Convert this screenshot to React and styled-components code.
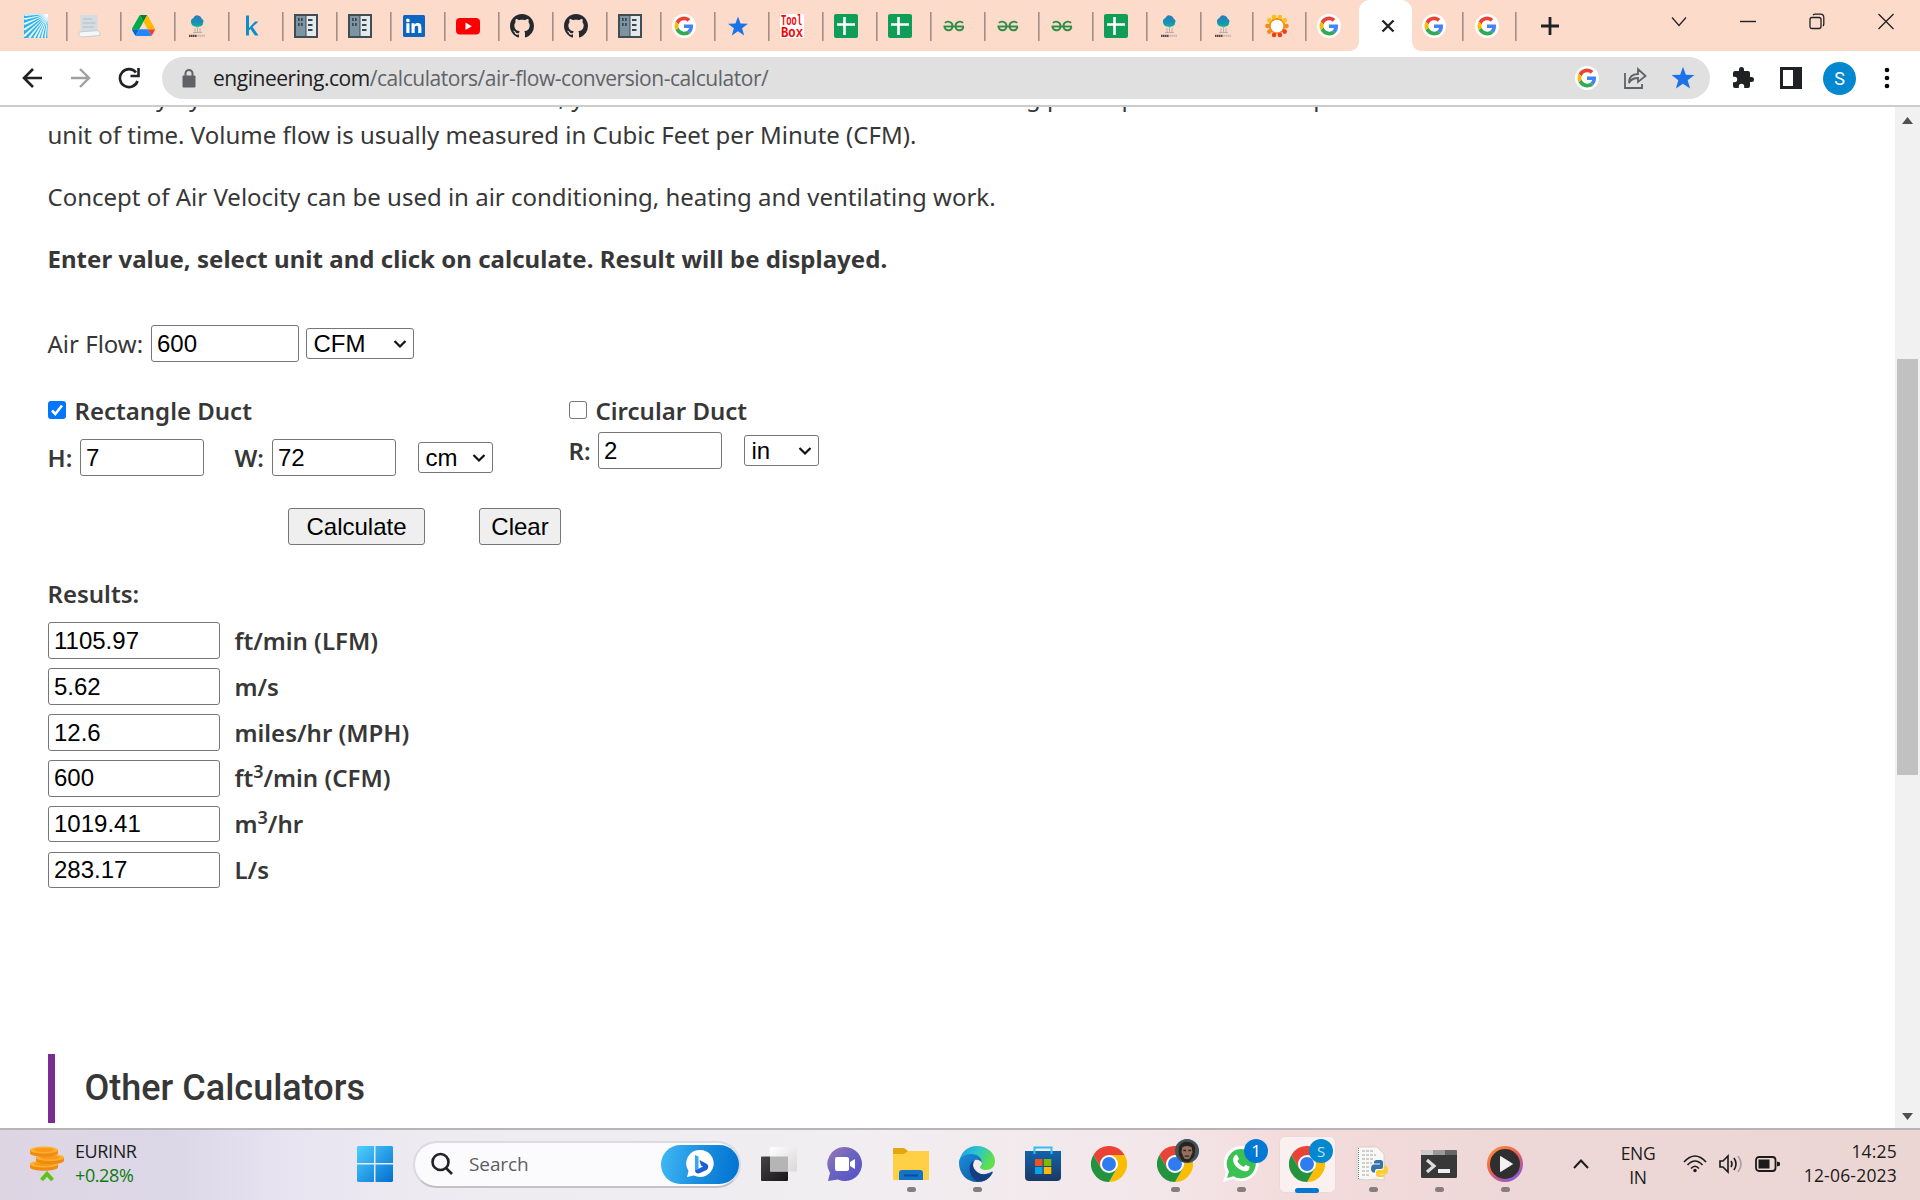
import React from 'react';
import styled, { createGlobalStyle } from 'styled-components';

const Global = createGlobalStyle`
  *{box-sizing:border-box}
  html,body{margin:0;padding:0;background:#fff}
  body{width:1920px;height:1200px;overflow:hidden;font-family:"Noto Sans",sans-serif}
  svg{display:block;flex:none}
`;
const ui = '"Open Sans","Noto Sans",sans-serif';

const Screen = styled.div`width:1920px;height:1200px;display:flex;flex-direction:column;overflow:hidden`;

const TabStrip = styled.div`height:51px;background:#fcdbca;display:flex;padding-left:13.5px;flex:none`;
const Tab = styled.div`
  width:${p => p.$w || 54}px;height:51px;flex:none;display:flex;align-items:center;padding:0 0 0 10.5px;
  background:linear-gradient(#a38e84,#a38e84) right 12px / ${p => (p.$bare ? 0 : 1.6)}px 29px no-repeat;
`;
const ActiveTab = styled.div`
  width:52.5px;height:51px;flex:none;background:#fff;border-radius:11px 11px 0 0;position:relative;
  display:flex;align-items:center;justify-content:center;padding-left:5px;
  &::before,&::after{content:"";position:absolute;bottom:0;width:9px;height:9px}
  &::before{left:-9px;background:radial-gradient(circle at 0 0,transparent 8.5px,#fff 9px)}
  &::after{right:-9px;background:radial-gradient(circle at 100% 0,transparent 8.5px,#fff 9px)}
`;
const NewTab = styled.div`width:66px;display:flex;align-items:center;justify-content:center`;
const WindowButtons = styled.div`margin-left:auto;display:flex;gap:53px;padding:13px 26px 0 0;height:30px`;

const Toolbar = styled.div`height:56px;flex:none;display:flex;align-items:center;border-bottom:2px solid #cbcccc;background:#fff;padding-left:21px`;
const NavButtons = styled.div`display:flex;gap:24px;width:141px`;
const AddressBar = styled.div`
  width:1548px;height:42px;border-radius:21px;background:#e0e0e0;display:flex;align-items:center;padding:0 15px 0 18px;
`;
const Url = styled.div`
  font:21px/42px ${ui};letter-spacing:-.46px;color:#5f6368;margin-left:15px;flex:1;white-space:nowrap;
  b{font-weight:400;color:#202124}
`;
const BarActions = styled.div`display:flex;gap:24px;align-items:center`;
const Extensions = styled.div`display:flex;align-items:center;margin-left:21px;gap:25px`;
const Avatar = styled.div`width:33px;height:33px;border-radius:50%;background:#0288d1;color:#fff;font:18px/33px Roboto,sans-serif;text-align:center;margin:0 3px 0 -4px`;

const Viewport = styled.div`height:1021px;flex:none;display:flex;overflow:hidden;background:#fff`;
const Page = styled.main`flex:1;min-width:0;padding-left:47.5px;color:#373737;font:24px/38.4px "Noto Sans",sans-serif;overflow:hidden`;
const Para = styled.p`margin:${p => p.$mt || 0}px 0 ${p => p.$mb || 24}px;white-space:nowrap;font-weight:${p => (p.$bold ? 700 : 400)};letter-spacing:${p => (p.$bold ? '.035px' : 0)}`;
const Row = styled.div`display:flex;align-items:center;margin-top:${p => p.$mt || 0}px;height:${p => p.$h || 37}px`;
const Text = styled.span`
  width:${p => (p.$w ? p.$w + 'px' : 'auto')};margin-left:${p => p.$ml || 0}px;
  font-weight:${p => (p.$plain ? 400 : 600)};white-space:nowrap;line-height:36px;flex:none;
`;
const Field = styled.input`
  width:${p => p.$w}px;height:${p => p.$h || 37}px;border:1.4px solid #767676;border-radius:3px;padding:0 5.5px;margin:0;
  font:24px "Liberation Sans",Arial,sans-serif;color:#000;background:#fff;flex:none;
`;
const SelectBox = styled.div`
  width:${p => p.$w}px;height:31px;border:1.4px solid #767676;border-radius:3px;display:flex;align-items:center;justify-content:space-between;
  padding:0 6px 0 7px;font:24px "Liberation Sans",Arial,sans-serif;color:#000;background:#fff;margin-left:${p => p.$ml}px;flex:none;
`;
const Ducts = styled.div`display:flex;margin-top:31px;height:96px`;
const Duct = styled.div`width:${p => p.$w}px;flex:none`;
const Check = styled.div`
  width:18px;height:18px;border-radius:3px;margin:0 9px 2px 0;flex:none;
  background:${p => (p.$on ? '#0075ff' : '#fff')};border:${p => (p.$on ? 0 : '1.5px solid #767676')};
`;
const Btn = styled.button`
  width:${p => p.$w}px;height:37px;border:1.4px solid #767676;border-radius:3px;background:#efefef;color:#000;
  font:24px "Liberation Sans",Arial,sans-serif;padding:1px 0 0 1px;margin:0;
`;
const Buttons = styled.div`display:flex;gap:54px;padding-left:240px;margin-top:19px`;
const Results = styled.div`display:flex;flex-direction:column;gap:9px;margin-top:10px`;
const ResultRow = styled.div`display:flex;height:37px;align-items:center;padding-bottom:${p => (p.$tight ? 1 : 0)}px`;
const Unit = styled.span`font-weight:600;line-height:36px;margin-left:15px;sup{font-size:18px;line-height:0;vertical-align:9px}`;
const Heading = styled.h2`
  margin:165px 0 0;height:69px;border-left:7px solid #7b2c91;padding-left:30px;font:500 36px/69px Roboto,sans-serif;color:#373737;
`;
const Scroll = styled.div`width:25px;background:#f1f1f1;display:flex;flex-direction:column;align-items:center;padding:10px 0 8px`;
const Thumb = styled.div`width:21px;height:416px;background:#c1c1c1;margin-top:235px;margin-bottom:auto`;

const Taskbar = styled.footer`
  height:72px;flex:none;border-top:2px solid #b9b3b8;display:flex;align-items:center;padding-bottom:2px;font-family:${ui};color:#1b1b1b;
  background:linear-gradient(90deg,#ded5e3 0,#dcd8e8 180px,#e8e3f1 285px,#edebf1 420px,#f1eef1 850px,#f3e7ea 1150px,#f4dbdb 1290px,#eed8d7 1500px,#ecd6d4 1920px);
`;
const Widget = styled.div`width:357px;padding-left:30px;display:flex;align-items:center;gap:9px;font-size:18px;line-height:24px;letter-spacing:-.4px;white-space:nowrap;
  em{font-style:normal;color:#0f7b0f;display:block}`;
const WidgetText = styled.div`padding-bottom:2px`;
const SearchBox = styled.div`
  width:328px;height:47px;margin:0 20px 0 20px;border-radius:24px;background:#fbfafc;border:2px solid #dcdae0;border-bottom-color:#c3c1c6;
  display:flex;align-items:center;padding:0 0 0 15px;color:#5d5d60;font-size:19px;letter-spacing:-.1px;
  span{margin-left:15px;flex:1}
`;
const BingPill = styled.div`width:78px;height:39px;border-radius:20px;background:linear-gradient(100deg,#40b9f5,#1b8fe0 50%,#0071d2);display:flex;align-items:center;justify-content:center`;
const Apps = styled.div`display:flex`;
const AppSlot = styled.div`
  width:${p => p.$w || 66}px;height:70px;display:flex;justify-content:center;align-items:center;position:relative;
  &::after{content:"";position:absolute;bottom:${p => (p.$active ? 6 : 7)}px;width:${p => (p.$active ? 24 : p.$dot ? 9 : 0)}px;height:5px;border-radius:3px;background:${p => (p.$active ? '#0078d4' : '#857d7f')}}
`;
const Tile = styled.div`width:57px;height:57px;flex:none;border-radius:6px;background:#faf0f0;border:1px solid #ead9da;display:flex;align-items:center;justify-content:center`;
const Badge = styled.div`
  position:absolute;left:${p => p.$x}px;top:10px;width:24px;height:24px;border-radius:50%;background:${p => p.$c || '#0078d4'};
  color:${p => p.$fg || '#fff'};font:${p => p.$fs || 17}px/24px ${ui};text-align:center;overflow:hidden;
`;
const Tray = styled.div`margin-left:auto;display:flex;align-items:center;font-size:17.5px;line-height:24px;letter-spacing:-.4px;padding-right:23px`;
const TrayIcons = styled.div`display:flex;align-items:center;gap:12px`;
const Lang = styled.div`text-align:center;width:60px;padding-top:1px;margin:0 15px 0 19px`;
const Clock = styled.div`text-align:right;width:117px;white-space:nowrap;display:flex;flex-direction:column;align-items:flex-end;letter-spacing:.2px;padding-bottom:2px`;

/* favicons */
const G = ({ s = 24 }) => (
  <svg width={s} height={s} viewBox="0 0 24 24"><circle cx="12" cy="12" r="12" fill="#fff" />
    <g transform="translate(2.6 2.6) scale(.392)">
      <path fill="#EA4335" d="M24 9.5c3.54 0 6.71 1.22 9.21 3.6l6.85-6.85C35.9 2.38 30.47 0 24 0 14.62 0 6.51 5.38 2.56 13.22l7.98 6.19C12.43 13.72 17.74 9.5 24 9.5z" />
      <path fill="#4285F4" d="M46.98 24.55c0-1.57-.15-3.09-.38-4.55H24v9.02h12.94c-.58 2.96-2.26 5.48-4.78 7.18l7.73 6c4.51-4.18 7.09-10.36 7.09-17.65z" />
      <path fill="#FBBC05" d="M10.53 28.59a14.5 14.5 0 0 1 0-9.18l-7.98-6.19a24 24 0 0 0 0 21.56l7.98-6.19z" />
      <path fill="#34A853" d="M24 48c6.48 0 11.93-2.13 15.89-5.81l-7.73-6c-2.15 1.45-4.92 2.3-8.16 2.3-6.26 0-11.57-4.22-13.47-9.91l-7.98 6.19C6.51 42.62 14.62 48 24 48z" />
    </g></svg>
);
const rayEnds = [[0, 1], [0, 5], [0, 10], [0, 15.5], [0, 22], [5, 24], [10, 24], [14, 24], [17.5, 24], [21, 24], [24, 24]];
const Rays = () => (
  <svg width="24" height="24" viewBox="0 0 24 24">
    <defs><radialGradient id="glow" cx="1" cy="0" r=".45"><stop offset=".2" stopColor="#fff" /><stop offset="1" stopColor="#fff" stopOpacity="0" /></radialGradient></defs>
    <rect width="24" height="24" fill="#2cb1ea" />
    {rayEnds.map(([x, y]) => <path key={x + '-' + y} d={`M24 0 ${x - 0.7} ${y - 0.7}L${x + 0.9} ${y + 0.9}z`} fill="#fff" opacity=".9" />)}
    <rect width="24" height="24" fill="url(#glow)" />
  </svg>
);
const Paper = () => (
  <svg width="24" height="24" viewBox="0 0 24 24"><path d="M2 1h17.500v17H3z" fill="#d3dce1" /><path d="M1 18 20 16.500q2.500 2 2 5L4 23q-4-1-3-5z" fill="#f4f7f8" stroke="#bcc5c9" strokeWidth=".8" /><path d="M5 5h9M4.500 9h13M4.500 13h11" stroke="#b3bec4" strokeWidth="1" /></svg>
);
const Drive = () => (
  <svg width="23" height="21" viewBox="0 0 87.3 78" preserveAspectRatio="none"><path d="m6.6 66.85 3.85 6.65c.8 1.4 1.95 2.5 3.3 3.3l13.75-23.8H0c0 1.55.4 3.1 1.2 4.5z" fill="#0066da" /><path d="M43.65 25 29.9 1.2c-1.35.8-2.5 1.9-3.3 3.3L1.2 48.5A9.06 9.06 0 0 0 0 53h27.5z" fill="#00ac47" /><path d="M73.55 76.8c1.35-.8 2.5-1.9 3.3-3.3l1.6-2.75 7.65-13.25c.8-1.4 1.2-2.95 1.2-4.5H59.8l5.85 11.5z" fill="#ea4335" /><path d="M43.65 25 57.4 1.2C56.05.4 54.5 0 52.9 0H34.4c-1.6 0-3.15.45-4.5 1.2z" fill="#00832d" /><path d="M59.8 53H27.5L13.75 76.8c1.35.8 2.9 1.2 4.5 1.2h50.8c1.6 0 3.15-.45 4.5-1.2z" fill="#2684fc" /><path d="m73.4 26.5-12.7-22c-.8-1.4-1.95-2.5-3.3-3.3L43.65 25 59.8 53h27.45c0-1.55-.4-3.1-1.2-4.5z" fill="#ffba00" /></svg>
);
const Tree = () => (
  <svg width="24" height="24" viewBox="0 0 24 24"><defs><linearGradient id="tree" x2="0" y2="1"><stop stopColor="#2d78c4" /><stop offset=".6" stopColor="#1595ae" /><stop offset="1" stopColor="#17b3a3" /></linearGradient></defs><path d="M5 8c-.5-2 1-3.500 2.500-4C8.500 2 10 1 11.500 1.500c2 0 4 1.500 4 3C17.500 5.500 18 7.500 17 9c0 2-1.500 3.500-3.500 3.500l-2 1-2-1C7 12.500 5 10.500 5 8z" fill="url(#tree)" /><path d="M11.500 12v7M9 14v5M14 14v5M7 18.500h9" stroke="#a5aaa8" strokeWidth=".8" /><path d="M3 21.800h8" stroke="#5e4646" strokeWidth="2.200" strokeDasharray="1.500 .4" /><path d="M11.500 21.800h8" stroke="#c9aea4" strokeWidth="2" strokeDasharray="1.400 .6" /></svg>
);
const Kaggle = () => <svg width="24" height="24" viewBox="0 0 24 24"><path d="M6 1.500h3v20H6zM8 15l7-7.500h3.500L12.600 13l6 8.500h-3.700l-4.500-6.600L8 17.300z" fill="#0c8fc7" /></svg>;
const Server = () => (
  <svg width="24" height="24" viewBox="0 0 24 24"><path d="M0 0h24v24H0z" fill="#414d54" /><path d="M2 2h9.500v20H2z" fill="#7d95a3" /><path d="M12.500 2H22v20h-9.500z" fill="#e3eaed" /><path d="M4 4h1.700v3H4zm3 0h1.700v3H7zM4 9h1.700v3H4zm3 0h1.700v3H7zM14 5h4.500v2H14zm0 5h4.500v2H14zm0 5h4.500v2H14z" fill="#3c474d" /></svg>
);
const LinkedIn = () => <svg width="24" height="24" viewBox="0 0 24 24"><rect x="1" y="1" width="22" height="22" rx="1.500" fill="#0a66c2" /><path fill="#fff" d="M4.300 9.300h3.200V19H4.300zM5.900 4.600a1.800 1.800 0 1 1 0 3.700 1.800 1.800 0 0 1 0-3.700zM9.500 9.300h3v1.300c.5-.9 1.500-1.600 3-1.600 3.200 0 3.900 2.100 3.900 4.700V19h-3.200v-4.700c0-1.200 0-2.600-1.600-2.600s-1.900 1.200-1.900 2.500V19H9.500z" /></svg>;
const YouTube = () => <svg width="24" height="24" viewBox="0 0 24 24"><rect y="4" width="24" height="16.500" rx="4" fill="#f00" /><path d="m9.500 8.500 6.300 3.700-6.300 3.700z" fill="#fff" /></svg>;
const GitHub = () => <svg width="24" height="24" viewBox="0 0 16 16"><path fill="#24292f" d="M8 0C3.580 0 0 3.580 0 8c0 3.540 2.290 6.530 5.470 7.590.4.070.55-.17.55-.38 0-.19-.01-.82-.01-1.490-2.010.37-2.530-.49-2.690-.94-.09-.23-.48-.94-.82-1.130-.28-.15-.68-.52-.01-.53.63-.01 1.080.58 1.230.82.72 1.210 1.870.87 2.330.66.070-.52.28-.87.51-1.070-1.780-.2-3.640-.89-3.640-3.950 0-.87.31-1.590.82-2.150-.08-.2-.36-1.020.08-2.120 0 0 .67-.21 2.200.82.64-.18 1.320-.27 2-.27s1.360.09 2 .27c1.530-1.040 2.200-.82 2.200-.82.44 1.100.16 1.920.08 2.120.51.56.82 1.270.82 2.150 0 3.070-1.870 3.750-3.650 3.950.29.25.54.73.54 1.480 0 1.070-.01 1.930-.01 2.200 0 .21.15.46.55.38A8.010 8.010 0 0 0 16 8c0-4.420-3.580-8-8-8z" /></svg>;
const Star = () => <svg width="24" height="24" viewBox="0 0 24 24"><path fill="#1a73e8" d="m12 2.500 2.500 6.900 7.500.3-5.900 4.600 2.100 7.200L12 17.300l-6.200 4.200 2.100-7.200L2 9.700l7.500-.3z" /></svg>;
const BigStar = () => <svg width="24" height="24" viewBox="1.500 2 21 20.500"><path fill="#1a73e8" d="m12 2.500 2.500 6.900 7.500.3-5.900 4.600 2.100 7.200L12 17.300l-6.200 4.200 2.100-7.200L2 9.700l7.500-.3z" /></svg>;
const Tool = () => (
  <svg width="24" height="24" viewBox="0 0 24 24"><rect width="24" height="24" fill="#fff" />
    <g fill="#f00" fontFamily="Liberation Mono, monospace" fontWeight="700" fontSize="10" transform="scale(1 1.550)">
      <text x="1" y="7.300" textLength="21" lengthAdjust="spacingAndGlyphs">Tool</text><text x="1" y="15" textLength="22" lengthAdjust="spacingAndGlyphs">Box</text>
    </g></svg>
);
const Sheets = () => <svg width="24" height="24" viewBox="0 0 24 24"><rect width="24" height="24" rx="2" fill="#0f9d58" /><path d="M3 10.500h18M10.500 3v18" stroke="#fff" strokeWidth="2.600" /></svg>;
const Geeks = () => (
  <svg width="24" height="24" viewBox="0 0 24 24" fill="none" stroke="#2f8d46" strokeWidth="1.900"><path d="M1.500 12.500h20.500" /><path d="M3 9C4.500 6.800 10.500 7 10.500 12S4 18 2.500 13M21 9C19.500 6.800 13.500 7 13.500 12s6.500 6 8 1" /></svg>
);
const Sun = () => (
  <svg width="24" height="24" viewBox="0 0 24 24"><circle cx="12" cy="12" r="7" fill="none" stroke="#f58a1c" strokeWidth="2.500" /><circle cx="12" cy="12" r="6.300" fill="#fff" />
    {Array.from({ length: 10 }, (_, i) => { const a = i * Math.PI / 5; return <circle key={i} cx={12 + 9.5 * Math.cos(a)} cy={12 + 9.5 * Math.sin(a)} r="2.300" fill={i < 4 && i > 0 ? '#ea3d22' : i > 5 ? '#fcc010' : '#f58a1c'} />; })}</svg>
);

const tabs = [Rays, Paper, Drive, Tree, Kaggle, Server, Server, LinkedIn, YouTube, GitHub, GitHub, Server, G, Star, Tool, Sheets, Sheets, Geeks, Geeks, Geeks, Sheets, Tree];

const Stroke = ({ w = 20, h = 20, d, c = '#202124', sw = 2.2 }) => <svg width={w} height={h} viewBox={`0 0 ${w} ${h}`} fill="none" stroke={c} strokeWidth={sw}><path d={d} /></svg>;
const Caret = () => <Stroke w={14} h={10} d="m1.500 2 5.500 5.500L12.500 2" c="#111" sw={2.2} />;

/* taskbar icons */
const Chrome = () => (
  <svg width="36" height="36" viewBox="0 0 48 48"><path d="M24 12h20.800A24 24 0 0 0 3.200 12L13.600 30z" fill="#ea4335" /><path d="M34.400 30 24 48A24 24 0 0 0 44.800 12H24z" fill="#fbbc04" /><path d="M13.600 30 3.200 12A24 24 0 0 0 24 48l10.400-18z" fill="#23933f" /><circle cx="24" cy="24" r="12" fill="#fff" /><circle cx="24" cy="24" r="9.300" fill="#2f7cf0" /></svg>
);
const Coins = () => (
  <svg width="36" height="36" viewBox="0 0 36 36">
    {[[14, 18], [20, 11.5], [14, 4]].map(([x, y]) => <g key={y}><path d={`M${x - 14} ${y}v3c0 5 28 5 28 0v-3z`} fill="#ef8b12" /><ellipse cx={x} cy={y} rx="14" ry="3.600" fill="#ffb02e" /><ellipse cx={x} cy={y} rx="10" ry="2" fill="#f79a1c" /></g>)}
    <path d="m11.500 34 5.500-6 5.500 6" fill="none" stroke="#5fc216" strokeWidth="4" /></svg>
);
const Windows = () => (
  <svg width="36" height="36" viewBox="0 0 36 36"><defs><linearGradient id="win" x2="1" y2="1"><stop stopColor="#4fd0ff" /><stop offset="1" stopColor="#006fd0" /></linearGradient></defs><path fill="url(#win)" d="M1 0h16v17H0V1zM18.500 0H35l1 1v16H18.500zM0 18.500h17V36H1l-1-1zM18.500 18.500H36V35l-1 1H18.500z" /></svg>
);
const Bing = () => (
  <svg width="28" height="28" viewBox="0 0 28 28"><path d="M14 0a13.500 13.500 0 1 1-6 25.500L1 27l1.500-6A13.500 13.500 0 0 1 14 0z" fill="#fff" /><path d="m9 5 3.500 1.500v12L9 21z" fill="#3aa5f5" /><path d="m13.500 10 7.500 4c2 2 1.500 4.500-.5 6L14 23c-2 1-5 0-5-2.500l8-4-2-1z" fill="#1b5fd6" /></svg>
);
const TaskView = () => (
  <svg width="36" height="36" viewBox="0 0 36 36"><defs><linearGradient id="tv" x2="1" y2="1"><stop stopColor="#444" /><stop offset="1" stopColor="#161616" /></linearGradient><linearGradient id="tw" x2="1" y2="1"><stop stopColor="#fff" /><stop offset="1" stopColor="#d9d7d8" /></linearGradient></defs><rect y="10.500" width="27" height="24.500" rx="1" fill="url(#tv)" /><rect x="9" y="1" width="27" height="24.500" rx="1" fill="url(#tw)" /><path d="M9 10.500h18v15H9z" fill="#b5b5b5" /></svg>
);
const Chat = () => (
  <svg width="36" height="36" viewBox="0 0 36 36"><defs><linearGradient id="ch" x2="1" y2="1"><stop stopColor="#a277b5" /><stop offset=".45" stopColor="#6a64c0" /><stop offset="1" stopColor="#554fc9" /></linearGradient></defs><path d="M18 1a17 17 0 1 1-7 32.500L1 35l2-8A17 17 0 0 1 18 1z" fill="url(#ch)" /><rect x="8" y="11" width="14" height="14" rx="2" fill="#fff" /><path d="m23 16 5-3v10l-5-3z" fill="#fff" /></svg>
);
const Folder = () => (
  <svg width="36" height="34" viewBox="0 0 36 34"><path d="M0 2q0-1 1-1h10l4 3h19q2 0 2 2v10H0z" fill="#e5a50d" /><path d="M0 7h11l4-3h21v28q0 1-1 1H1q-1 0-1-1z" fill="#ffcf45" /><path d="M6 33V26q0-3 3-3h18q3 0 3 3v7z" fill="#1273c9" /><path d="M11 28.500h14" stroke="#0a4d97" strokeWidth="2" /></svg>
);
const Edge = () => (
  <svg width="36" height="36" viewBox="0 0 36 36"><defs><linearGradient id="e1" x2="1" y2=".4"><stop stopColor="#1c9bdb" /><stop offset=".5" stopColor="#2bc3d2" /><stop offset="1" stopColor="#60e04a" /></linearGradient><linearGradient id="e2" x2="1" y2="1"><stop stopColor="#1a8fe0" /><stop offset="1" stopColor="#0f4a90" /></linearGradient></defs>
    <path d="M0 17C1 7 8 0 18 0s18 7 18 15c0 6-4 9-9 9-4 0-6-2-6-3s2-2 2-4c0-4-4-6-8-6C8 11 2 14 0 18z" fill="url(#e1)" /><path d="M0 17c0-6 6-9 12-9 7 0 11 4 11 9-1-2-4-4-7-3-5 2-4 12 5 14 5 1 9-1 12-2.500 1 0 1 1 .5 1.500A18 18 0 0 1 18 36C8 36 0 28 0 17z" fill="url(#e2)" /><path d="M16 14c-7 2-8 16 3 21.800C28 36 31 31 33.500 27 25 31 15 27 14 19q0-3 2-5z" fill="#123f80" /></svg>
);
const Store = () => (
  <svg width="36" height="36" viewBox="0 0 36 36"><defs><linearGradient id="st" x2="0" y2="1"><stop stopColor="#1164ad" /><stop offset="1" stopColor="#1c3864" /></linearGradient></defs><path d="M0 5h36v26q0 4-4 4H4q-4 0-4-4z" fill="url(#st)" /><path d="M9.500 8V1.500h17V8" fill="none" stroke="#35bdf2" strokeWidth="2" /><path d="M10 13h7.500v7H10z" fill="#f25022" /><path d="M18.800 13h7.500v7h-7.500z" fill="#7fba00" /><path d="M10 21h7.500v7H10z" fill="#00a4ef" /><path d="M18.800 21h7.500v7h-7.500z" fill="#ffb900" /></svg>
);
const WhatsApp = () => (
  <svg width="36" height="36" viewBox="0 0 36 36"><path d="M18 0a17.500 17.500 0 1 1-8 33L0 36l3-10A17.500 17.500 0 0 1 18 0z" fill="#fff" /><path d="M18 3a14.700 14.700 0 1 1-7.500 27.300L4 32l2-6.500A14.700 14.700 0 0 1 18 3z" fill="#3bc253" /><path d="M12 9.500c1-1 2-.8 2.600.4l1.200 2.700c.3.900-1.300 2-1.300 2.600 1 2.500 3.500 4.600 6 5.500.7 0 1.700-2 2.500-1.800l3.300 1.700c.8.600 0 3-1.200 3.900-2 1.300-4.500 1-8-1-4-2.300-7-6-7-9.500 0-2 .8-3.500 1.900-4.500z" fill="#fff" /></svg>
);
const Python = () => (
  <svg width="36" height="36" viewBox="0 0 36 36"><path d="M2 1h20l7 7v26l-9-1-8 1-10-1z" fill="#f7f7f5" stroke="#cfcbc8" strokeWidth=".8" /><path d="M7 5h12M7 9h14M7 13h11M7 17h10M7 21h8M7 25h8M7 29h8" stroke="#a5a5a5" strokeWidth="1" strokeDasharray="3 1" /><path d="M3.500 2v31" stroke="#777" strokeWidth="1" strokeDasharray="1 1" />
    <path d="M21.500 14h4q2.500 0 2.500 2.500v4.500q0 2-2 2h-4q-2 0-2 2v1.500h-1.500q-2.500-.5-2.500-4t2.500-4H25v-1h-6v-1q0-2.500 2.500-2.500z" fill="#3572a5" /><path d="M27.500 31h-4q-2.500 0-2.500-2.500V26q0-2 2-2h4q2 0 2-2v-2.500h1.500q2.500.5 2.500 4.500t-2.500 4.300H25v.7h5q0 2-2.500 2z" fill="#ffcc33" /></svg>
);
const Terminal = () => (
  <svg width="36" height="28" viewBox="0 0 36 28"><rect width="36" height="28" rx="1.500" fill="#383838" /><path d="M1 0h11v5H0V1z" fill="#ccc" /><path d="M12 0h12v5H12z" fill="#9a9a9a" /><path d="M24 0h11l1 1v4H24z" fill="#666" /><path d="m6 10 7 6-7 6" fill="none" stroke="#ddd" strokeWidth="3.200" /><path d="M17 19h12v4H17z" fill="#eee" /></svg>
);
const Media = () => (
  <svg width="36" height="36" viewBox="0 0 36 36"><defs><linearGradient id="md" x2=".7" y2="1"><stop stopColor="#fb9a30" /><stop offset=".5" stopColor="#f0604f" /><stop offset="1" stopColor="#8958d8" /></linearGradient></defs><circle cx="18" cy="18" r="18" fill="url(#md)" /><circle cx="18" cy="18" r="15" fill="#2f2f2f" /><path d="m13.500 10.500 12 7.500-12 7.500z" fill="#f2f2f2" stroke="#f2f2f2" strokeLinejoin="round" /></svg>
);
const Face = () => (
  <svg width="24" height="24" viewBox="0 0 26 26"><circle cx="13" cy="13" r="13" fill="#4a5250" /><path d="M4 9q3-7 10-6t8 7l-1 9-6 6-7-1-4-7z" fill="#262321" /><path d="M8 9q5-3 10 0l1 5-3 7-3 1-3-1-3-7z" fill="#94705e" /><path d="M9 12.500h3M14.500 12.500h3M10.500 18.500h5" stroke="#33261f" strokeWidth="1.500" /></svg>
);

const results = [
  ['1105.97', 'ft/min (LFM)'], ['5.62', 'm/s'], ['12.6', 'miles/hr (MPH)'],
  ['600', <>ft<sup>3</sup>/min (CFM)</>], ['1019.41', <>m<sup>3</sup>/hr</>], ['283.17', 'L/s'],
];

export default function App() {
  return (
    <Screen>
      <Global />
      <TabStrip>
        {tabs.map((I, i) => <Tab key={i}><I /></Tab>)}
        <Tab $w={52.5}><Tree /></Tab>
        <Tab $w={52.5}><Sun /></Tab>
        <Tab $w={52.5} $bare><G /></Tab>
        <ActiveTab><Stroke w={14} h={14} d="m1.500 1.500 11 11M12.500 1.500l-11 11" sw={2.3} /></ActiveTab>
        <Tab $w={52.5}><G /></Tab>
        <Tab $w={52.5}><G /></Tab>
        <NewTab><Stroke w={18} h={18} d="M9 0v18M0 9h18" sw={2.8} /></NewTab>
        <WindowButtons>
          <Stroke w={16} h={17} d="m1 4.500 7 8 7-8" sw={1.2} />
          <Stroke w={16} h={17} d="M0 8.500h16" sw={1.4} />
          <Stroke w={16} h={17} d="M1 6.500q0-2 2-2h7q2 0 2 2v7q0 2-2 2H3q-2 0-2-2zM4 2q1-.8 2-.8h5.500q3.300 0 3.300 3.300V11q0 1-.8 2" sw={1.3} />
          <Stroke w={16} h={17} d="m.5 1 15 15M15.500 1l-15 15" sw={1.3} />
        </WindowButtons>
      </TabStrip>
      <Toolbar>
        <NavButtons>
          <Stroke w={24} h={22} d="M21 11H3M12 2l-9 9 9 9" sw={2.6} />
          <Stroke w={24} h={22} d="M2 11h18M11 2l9 9-9 9" c="#a0a0a0" sw={2.4} />
          <Stroke w={24} h={22} d="M19 5.500A9 9 0 1 0 20.500 14M21.500 1v8h-8" sw={2.6} />
        </NavButtons>
        <AddressBar>
          <svg width="18" height="20" viewBox="0 0 18 20"><path d="M3 8h12v11H3z" fill="#5f6368" stroke="#5f6368" strokeLinejoin="round" /><path d="M5.500 9V5.500a3.500 3.500 0 0 1 7 0V9" fill="none" stroke="#5f6368" strokeWidth="2" /></svg>
          <Url><b>engineering.com</b>/calculators/air-flow-conversion-calculator/</Url>
          <BarActions>
            <G />
            <Stroke w={24} h={24} d="M2 7v15h17v-4M6 17C6 11 9 8 15 8V3l7.500 7L15 16v-4c-4 0-7 1-9 5z" c="#5f6368" sw={1.8} />
            <BigStar />
          </BarActions>
        </AddressBar>
        <Extensions>
          <svg width="24" height="24" viewBox="0 0 24 24"><path fill="#202124" d="M20.500 11H19V7a2 2 0 0 0-2-2h-4V3.500a2.500 2.500 0 0 0-5 0V5H4a2 2 0 0 0-2 2v3.800h1.500a2.700 2.700 0 0 1 0 5.400H2V20a2 2 0 0 0 2 2h3.800v-1.500a2.700 2.700 0 0 1 5.400 0V22H17a2 2 0 0 0 2-2v-4h1.500a2.500 2.500 0 0 0 0-5z" /></svg>
          <svg width="22" height="22" viewBox="0 0 22 22"><path fill="#202124" fillRule="evenodd" d="M0 0h22v22H0zM3 3v16h10V3z" /></svg>
          <Avatar>S</Avatar>
          <svg width="6" height="22" viewBox="0 0 6 22"><circle cx="3" cy="3" r="2.300" /><circle cx="3" cy="11" r="2.300" /><circle cx="3" cy="19" r="2.300" /></svg>
        </Extensions>
      </Toolbar>
      <Viewport>
        <Page>
          <Para $mt={-29.5} $mb={23.6}>air velocity by the cross-section area of a duct, you can determine the air volume flowing past a point in the duct per<br />unit of time. Volume flow is usually measured in Cubic Feet per Minute (CFM).</Para>
          <Para>Concept of Air Velocity can be used in air conditioning, heating and ventilating work.</Para>
          <Para $bold>Enter value, select unit and click on calculate. Result will be displayed.</Para>
          <Row $mt={46.5}>
            <Text $plain $w={103}>Air Flow:</Text><Field $w={148} defaultValue="600" /><SelectBox $w={108} $ml={7}>CFM<Caret /></SelectBox>
          </Row>
          <Ducts>
            <Duct $w={521}>
              <Row $h={36}><Check $on><Stroke w={18} h={18} d="m4 9.500 3.300 3.500L14 4.500" c="#fff" sw={2.6} /></Check><Text>Rectangle Duct</Text></Row>
              <Row $mt={10}><Text $w={32}>H:</Text><Field $w={124} defaultValue="7" /><Text $w={37} $ml={31}>W:</Text><Field $w={124} defaultValue="72" /><SelectBox $w={75} $ml={22}>cm<Caret /></SelectBox></Row>
            </Duct>
            <Duct $w={400}>
              <Row $h={36}><Check /><Text>Circular Duct</Text></Row>
              <Row $mt={3}><Text $w={29}>R:</Text><Field $w={124} defaultValue="2" /><SelectBox $w={75} $ml={22}>in<Caret /></SelectBox></Row>
            </Duct>
          </Ducts>
          <Buttons><Btn $w={137}>Calculate</Btn><Btn $w={82}>Clear</Btn></Buttons>
          <Row $mt={31} $h={36}><Text>Results:</Text></Row>
          <Results>{results.map(([v, u], i) => <ResultRow key={v} $tight={i > 2}><Field $w={172} $h={i > 3 ? 36 : 37} defaultValue={v} /><Unit>{u}</Unit></ResultRow>)}</Results>
          <Heading>Other Calculators</Heading>
        </Page>
        <Scroll>
          <svg width="11" height="7" viewBox="0 0 11 7"><path d="M0 7 5.500 0 11 7z" fill="#505050" /></svg>
          <Thumb />
          <svg width="11" height="7" viewBox="0 0 11 7"><path d="m0 0 5.500 7L11 0z" fill="#505050" /></svg>
        </Scroll>
      </Viewport>
      <Taskbar>
        <Widget><Coins /><WidgetText>EURINR<em>+0.28%</em></WidgetText></Widget>
        <Windows />
        <SearchBox><Stroke w={24} h={24} d="M10.500 2a8 8 0 1 0 0 16 8 8 0 0 0 0-16zM16 16l6 6" sw={2.6} /><span>Search</span><BingPill><Bing /></BingPill></SearchBox>
        <Apps>
          <AppSlot $w={36}><TaskView /></AppSlot>
          <AppSlot $w={96}><Chat /></AppSlot>
          <AppSlot $w={36} $dot><Folder /></AppSlot>
          <AppSlot $w={96} $dot><Edge /></AppSlot>
          <AppSlot $w={36}><Store /></AppSlot>
          <AppSlot $w={96}><Chrome /></AppSlot>
          <AppSlot $w={36} $dot><Chrome /><Badge $x={18}><Face /></Badge></AppSlot>
          <AppSlot $w={96} $dot><WhatsApp /><Badge $x={51}>1</Badge></AppSlot>
          <AppSlot $w={36} $active><Tile><Chrome /></Tile><Badge $x={20} $c="#0288d1" $fg="#bfe4f7" $fs={15}>S</Badge></AppSlot>
          <AppSlot $w={96} $dot><Python /></AppSlot>
          <AppSlot $w={36} $dot><Terminal /></AppSlot>
          <AppSlot $w={96} $dot><Media /></AppSlot>
        </Apps>
        <Tray>
          <Stroke w={16} h={10} d="m1 9 7-7.500L15 9" sw={2} c="#1b1b1b" />
          <Lang>ENG<br />IN</Lang>
          <TrayIcons>
            <svg width="24" height="18" viewBox="0 0 24 18" fill="none" stroke="#1b1b1b" strokeWidth="1.700"><path d="M1 7Q12-5 23 7M4.500 10q7.500-8 15 0M8 13.500q4-4.500 8 0" /><circle cx="12" cy="15.500" r="1.700" fill="#1b1b1b" stroke="none" /></svg>
            <svg width="24" height="20" viewBox="0 0 24 20" fill="none" stroke="#1b1b1b" strokeWidth="1.600"><path d="M1 7h3l5-5v16l-5-5H1zM12 7q2 3 0 6M15 4q4 6 0 12" /><path d="M19 2q6 8 0 16" opacity=".3" /></svg>
            <svg width="25" height="16" viewBox="0 0 25 16"><rect x="1" y="1" width="19.500" height="14" rx="3" fill="none" stroke="#1b1b1b" strokeWidth="1.800" /><path d="M3.500 3.500h11v9h-11zM22 5.500l3 1v3l-3 1z" fill="#1b1b1b" /></svg>
          </TrayIcons>
          <Clock><span>14:25</span><span>12-06-2023</span></Clock>
        </Tray>
      </Taskbar>
    </Screen>
  );
}
